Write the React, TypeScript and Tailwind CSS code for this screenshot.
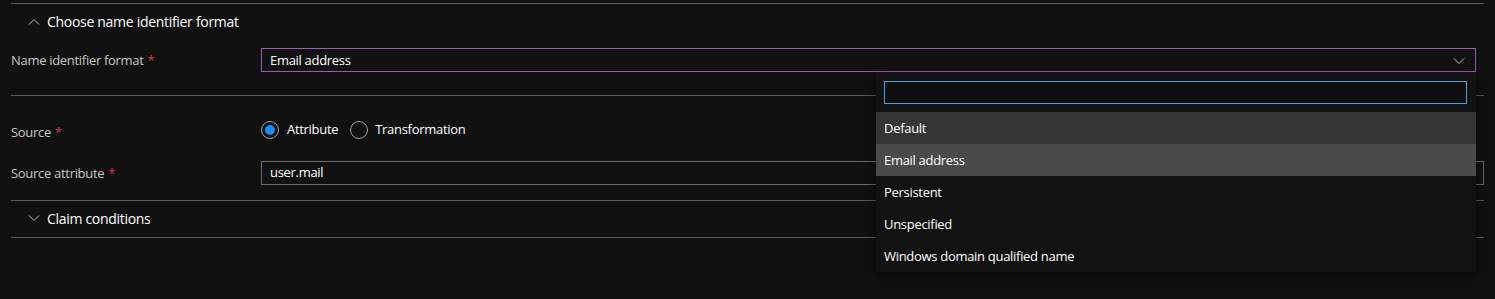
import React from "react";

const Chevron = ({ up }: { up?: boolean }) => (
  <svg width="12" height="8" viewBox="0 0 12 8" fill="none" className="shrink-0">
    {up ? (
      <path d="M1 6.5 L6 1.5 L11 6.5" stroke="#bdbdbd" strokeWidth="1" />
    ) : (
      <path d="M1 1.5 L6 6.5 L11 1.5" stroke="#bdbdbd" strokeWidth="1" />
    )}
  </svg>
);

const Req = () => <span className="text-[#e0304a] ml-[4px]">*</span>;

export default function App() {
  const items = ["Default", "Email address", "Persistent", "Unspecified", "Windows domain qualified name"];
  return (
    <div
      className="w-[1495px] h-[299px] bg-[#111111] text-[13px] tracking-[-0.3px] text-white overflow-hidden"
      style={{ fontFamily: '"Open Sans", "Noto Sans", sans-serif' }}
    >
      <div className="pl-[11px] pr-[11px] pt-[3px]">
        <div className="border-t border-[#5a5a5a]">
          <div className="h-[34px] flex items-center pl-[17px] gap-[7px] pt-[1px]">
            <Chevron up />
            <span className="text-white text-[14px]">Choose name identifier format</span>
          </div>
          <div className="h-[57px] flex items-start pt-[10px]">
            <div className="w-[250px] h-[24px] flex items-center text-[#c8c8c8] pt-[1px]">
              Name identifier format
              <Req />
            </div>
            <div className="relative w-[1215px]">
              <div className="h-[24px] border border-[#9b59b6] flex items-center justify-between pl-[8px] pr-[10px] pt-[1px]">
                <span>Email address</span>
                <Chevron />
              </div>
              <div className="absolute right-0 top-[24px] w-[600px] h-[200px] bg-[#121212] shadow-[0_4px_10px_rgba(0,0,0,0.6)] z-10">
                <div className="pt-[9px] pl-[8px] pr-[9px] h-[40px]">
                  <div className="h-[23px] border border-[#5b9bd5] bg-[#0f0f10]" />
                </div>
                {items.map((it, i) => (
                  <div
                    key={it}
                    className={`h-[32px] flex items-center pl-[8px] pt-[1px] ${
                      i === 0 ? "bg-[#363636]" : i === 1 ? "bg-[#4a4a4a]" : ""
                    }`}
                  >
                    {it}
                  </div>
                ))}
              </div>
            </div>
          </div>
          <div className="border-t border-[#5a5a5a]">
            <div className="pt-[22px] pb-[15px] flex flex-col gap-[19px]">
              <div className="h-[24px] flex items-center">
                <div className="w-[250px] text-[#c8c8c8] pt-[6px]">
                  Source
                  <Req />
                </div>
                <div className="flex items-center">
                  <span className="w-[18px] h-[18px] rounded-full border border-[#a0a0a0] flex items-center justify-center">
                    <span className="w-[10px] h-[10px] rounded-full bg-[#1a8cff]" />
                  </span>
                  <span className="ml-[8px]">Attribute</span>
                  <span className="ml-[12px] w-[18px] h-[18px] rounded-full border border-[#a0a0a0]" />
                  <span className="ml-[7px]">Transformation</span>
                </div>
              </div>
              <div className="h-[24px] flex items-center">
                <div className="w-[250px] text-[#c8c8c8] pt-[2px]">
                  Source attribute
                  <Req />
                </div>
                <div className="flex-1 h-[24px] border border-[#6b6b6b] flex items-center pl-[8px]">user.mail</div>
              </div>
            </div>
          </div>
          <div className="border-t border-[#5a5a5a]">
            <div className="h-[36px] flex items-center pl-[17px] gap-[7px] pb-[2px]">
              <Chevron />
              <span className="text-[14px]">Claim conditions</span>
            </div>
          </div>
          <div className="border-t border-[#5a5a5a]" />
        </div>
      </div>
    </div>
  );
}
